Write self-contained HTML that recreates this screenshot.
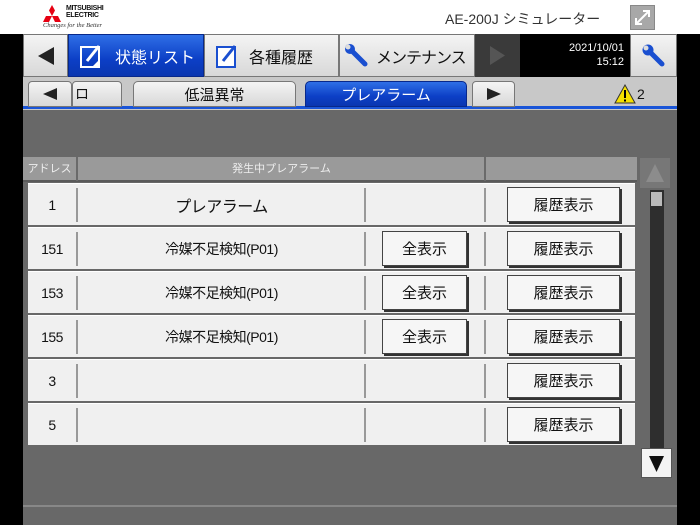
<!DOCTYPE html>
<html><head><meta charset="utf-8"><style>
*{margin:0;padding:0;box-sizing:border-box}
body{width:700px;height:525px;position:relative;overflow:hidden;background:#fff;font-family:"Liberation Sans","Noto Sans CJK JP",sans-serif}
.a{position:absolute}
.btn{position:absolute;background:linear-gradient(#f4f4f4,#d8d8d8);border:1px solid #777;display:flex;align-items:center;justify-content:center;color:#111;white-space:nowrap}
.blue{background:linear-gradient(#2f6fe6,#0c3fc6 60%,#0a36b0);color:#fff;border:1px solid #08288a}
.row{position:absolute;left:28px;width:607px;height:42px;background:#f0f0f0;border-top:1px solid #fff}
.row .c{position:absolute;top:0;height:42px;display:flex;align-items:center;justify-content:center;font-size:14px;color:#111;letter-spacing:-0.5px}
.sep{position:absolute;top:4px;width:2px;height:34px;background:#999}
.pb{position:absolute;top:3px;height:35px;background:#f6f6f6;border:1px solid #444;box-shadow:2px 2px 0 #333;display:flex;align-items:center;justify-content:center;font-size:15px;color:#111}
</style></head><body>
<div class="a" style="left:40px;top:5px;width:24px;height:20px">
<svg width="24" height="20" viewBox="0 0 24 20"><polygon points="12,0 15,5.5 12,11 9,5.5" fill="#e60012"/><polygon points="9,11 12,11 9,17 3,17 6,11" fill="#e60012"/><polygon points="12,11 15,11 18,11 21,17 15,17" fill="#e60012"/></svg></div>
<div class="a" style="left:66px;top:5px;font-size:7px;line-height:7px;font-weight:bold;color:#111;letter-spacing:-0.3px">MITSUBISHI<br>ELECTRIC</div>
<div class="a" style="left:43px;top:22px;font-size:6.5px;font-style:italic;font-family:'Liberation Serif',serif;color:#333">Changes for the Better</div>
<div class="a" style="left:445px;top:9px;font-size:14px;color:#333;white-space:nowrap">AE-200J シミュレーター</div>
<div class="a" style="left:630px;top:5px;width:25px;height:25px;background:#a8a8a8;border:1px solid #888">
<svg width="23" height="23" viewBox="0 0 23 23"><path d="M5 18 L18 5 M12 5 H18 V11 M5 12 V18 H11" stroke="#fff" stroke-width="2" fill="none"/></svg></div>
<div class="a" style="left:0;top:34px;width:23px;height:491px;background:#000"></div>
<div class="a" style="left:677px;top:34px;width:23px;height:491px;background:#000"></div>
<div class="a" style="left:23px;top:34px;width:654px;height:491px;background:#686868"></div>
<div class="btn" style="left:23px;top:34px;width:45px;height:43px"><svg width="20" height="20"><polygon points="18,1 18,19 2,10" fill="#222"/></svg></div>
<div class="btn blue" style="left:68px;top:34px;width:136px;height:43px;justify-content:flex-start;padding-left:10px;font-size:16px">
<svg width="24" height="26" viewBox="0 0 24 26" style="margin-right:12px"><rect x="2" y="4" width="18" height="20" fill="none" stroke="#fff" stroke-width="2"/><path d="M8 18 L16 8 L20 3" stroke="#fff" stroke-width="3"/><polygon points="13,24 20,17 20,24" fill="#fff"/></svg>状態リスト</div>
<div class="btn" style="left:204px;top:34px;width:135px;height:43px;justify-content:flex-start;padding-left:10px;font-size:16px">
<svg width="24" height="26" viewBox="0 0 24 26" style="margin-right:10px"><rect x="2" y="4" width="18" height="20" fill="#fff" stroke="#1a4fd0" stroke-width="2"/><path d="M8 18 L16 8 L20 3" stroke="#1a4fd0" stroke-width="3"/></svg>各種履歴</div>
<div class="btn" style="left:339px;top:34px;width:136px;height:43px;justify-content:flex-start;padding-left:4px;font-size:16px;letter-spacing:-1px">
<svg width="26" height="26" viewBox="0 0 26 26" style="margin-right:6px"><path d="M4 4 L14 14 L21 21" stroke="#1a4fd0" stroke-width="5" stroke-linecap="round"/><circle cx="6" cy="6" r="5" fill="#1a4fd0"/><circle cx="4" cy="4" r="2.5" fill="#ddd"/></svg>メンテナンス</div>
<div class="a" style="left:475px;top:34px;width:45px;height:43px;background:#3a3a3a"><svg width="45" height="43"><polygon points="15,12 15,31 30,21.5" fill="#555"/></svg></div>
<div class="a" style="left:520px;top:34px;width:110px;height:43px;background:#000;color:#fff;font-size:11px;text-align:right;padding:7px 6px 0 0;line-height:14px">2021/10/01<br>15:12</div>
<div class="btn" style="left:630px;top:34px;width:47px;height:43px"><svg width="26" height="26" viewBox="0 0 26 26"><path d="M7 7 L14 14 L21 21" stroke="#1a4fd0" stroke-width="5" stroke-linecap="round"/><circle cx="7" cy="7" r="5.5" fill="#1a4fd0"/><circle cx="5" cy="5" r="2.5" fill="#ddd"/></svg></div>
<div class="a" style="left:23px;top:77px;width:654px;height:33px;background:#c8c8c8"></div>
<div class="a" style="left:23px;top:106px;width:654px;height:3px;background:#1a55d8"></div>
<div class="btn" style="left:72px;top:81px;width:50px;height:26px;border-radius:4px 4px 0 0;justify-content:flex-start;padding-left:2px;font-size:14px">ロ</div>
<div class="btn" style="left:28px;top:81px;width:44px;height:26px;border-radius:4px 4px 0 0"><svg width="18" height="14"><polygon points="16,1 16,13 2,7" fill="#222"/></svg></div>
<div class="btn" style="left:133px;top:81px;width:163px;height:26px;border-radius:5px 5px 0 0;font-size:15px">低温異常</div>
<div class="btn blue" style="left:305px;top:81px;width:162px;height:26px;border-radius:5px 5px 0 0;font-size:15px">プレアラーム</div>
<div class="btn" style="left:472px;top:81px;width:43px;height:26px;border-radius:4px 4px 0 0"><svg width="18" height="14"><polygon points="2,1 2,13 16,7" fill="#222"/></svg></div>
<div class="a" style="left:614px;top:84px"><svg width="22" height="20"><polygon points="11,1 21,19 1,19" fill="#f5e000" stroke="#333" stroke-width="1"/><rect x="10" y="6" width="2" height="8" fill="#000"/><rect x="10" y="15.5" width="2" height="2" fill="#000"/></svg></div>
<div class="a" style="left:637px;top:86px;font-size:14px;color:#111">2</div>
<div class="a" style="left:23px;top:157px;width:614px;height:25px;background:#9a9a9a;border-bottom:2px solid #5a5a5a"></div>
<div class="a" style="left:23px;top:157px;width:53px;height:24px;color:#eee;font-size:11px;line-height:24px;text-align:center">アドレス</div>
<div class="a" style="left:76px;top:157px;width:2px;height:24px;background:#6a6a6a"></div>
<div class="a" style="left:78px;top:157px;width:407px;height:24px;color:#eee;font-size:11px;line-height:24px;text-align:center">発生中プレアラーム</div>
<div class="a" style="left:484px;top:157px;width:2px;height:24px;background:#6a6a6a"></div>
<div class="row" style="top:183px"><div class="c" style="left:0;width:48px">1</div><div class="sep" style="left:48px"></div><div class="c" style="left:50px;width:287px;font-size:16px">プレアラーム</div><div class="sep" style="left:336px"></div><div class="sep" style="left:456px"></div><div class="pb" style="left:479px;width:113px">履歴表示</div></div>
<div class="row" style="top:227px"><div class="c" style="left:0;width:48px">151</div><div class="sep" style="left:48px"></div><div class="c" style="left:50px;width:287px">冷媒不足検知(P01)</div><div class="sep" style="left:336px"></div><div class="pb" style="left:354px;width:85px">全表示</div><div class="sep" style="left:456px"></div><div class="pb" style="left:479px;width:113px">履歴表示</div></div>
<div class="row" style="top:271px"><div class="c" style="left:0;width:48px">153</div><div class="sep" style="left:48px"></div><div class="c" style="left:50px;width:287px">冷媒不足検知(P01)</div><div class="sep" style="left:336px"></div><div class="pb" style="left:354px;width:85px">全表示</div><div class="sep" style="left:456px"></div><div class="pb" style="left:479px;width:113px">履歴表示</div></div>
<div class="row" style="top:315px"><div class="c" style="left:0;width:48px">155</div><div class="sep" style="left:48px"></div><div class="c" style="left:50px;width:287px">冷媒不足検知(P01)</div><div class="sep" style="left:336px"></div><div class="pb" style="left:354px;width:85px">全表示</div><div class="sep" style="left:456px"></div><div class="pb" style="left:479px;width:113px">履歴表示</div></div>
<div class="row" style="top:359px"><div class="c" style="left:0;width:48px">3</div><div class="sep" style="left:48px"></div><div class="sep" style="left:336px"></div><div class="sep" style="left:456px"></div><div class="pb" style="left:479px;width:113px">履歴表示</div></div>
<div class="row" style="top:403px"><div class="c" style="left:0;width:48px">5</div><div class="sep" style="left:48px"></div><div class="sep" style="left:336px"></div><div class="sep" style="left:456px"></div><div class="pb" style="left:479px;width:113px">履歴表示</div></div>
<div class="a" style="left:640px;top:158px;width:30px;height:30px;background:#777"><svg width="30" height="30"><polygon points="15,6 24,24 6,24" fill="#8c8c8c"/></svg></div>
<div class="a" style="left:650px;top:190px;width:14px;height:258px;background:#2e2e2e"></div>
<div class="a" style="left:651px;top:192px;width:11px;height:14px;background:#bbb"></div>
<div class="a" style="left:641px;top:448px;width:31px;height:30px;background:#f4f4f4;border:1px solid #555"><svg width="29" height="28"><polygon points="7,7 22,7 14.5,23" fill="#111"/></svg></div>
<div class="a" style="left:23px;top:505px;width:654px;height:2px;background:#888"></div>
</body></html>
